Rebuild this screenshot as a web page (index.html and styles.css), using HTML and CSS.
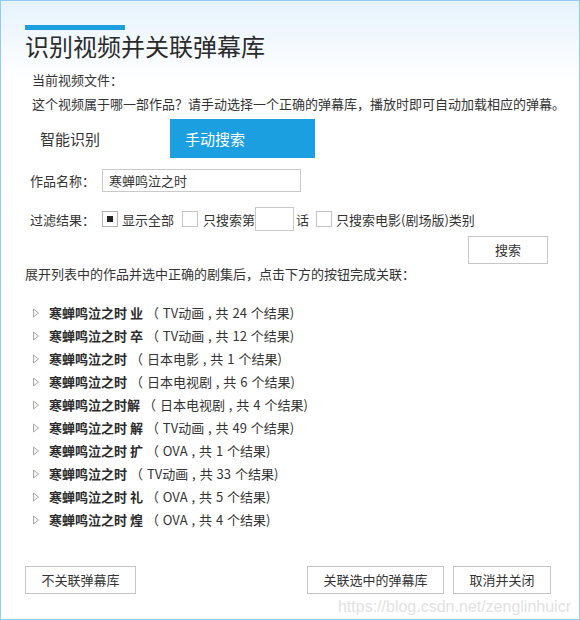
FILE: index.html
```html
<!DOCTYPE html>
<html lang="zh-CN">
<head>
<meta charset="utf-8">
<title>识别视频并关联弹幕库</title>
<link rel="stylesheet" href="styles.css">
</head>
<body>
<div class="window">
  <div class="accent"></div>
  <h1 class="title">识别视频并关联弹幕库</h1>
  <div class="info">
    <p>当前视频文件：</p>
    <p>这个视频属于哪一部作品？请手动选择一个正确的弹幕库，播放时即可自动加载相应的弹幕。</p>
  </div>
  <div class="tabs">
    <div class="tab">智能识别</div>
    <div class="tab active">手动搜索</div>
  </div>
  <div class="row row-name">
    <span class="label">作品名称：</span>
    <div class="input name-input">寒蝉鸣泣之时</div>
  </div>
  <div class="row row-filter">
    <span class="label">过滤结果：</span>
    <span class="check checked"></span>
    <span class="opt">显示全部</span>
    <span class="check"></span>
    <span class="opt opt-ep">只搜索第</span>
    <div class="input ep-input"></div>
    <span class="opt opt-hua">话</span>
    <span class="check"></span>
    <span class="opt">只搜索电影(剧场版)类别</span>
  </div>
  <div class="search-row">
    <button class="btn btn-search">搜索</button>
  </div>
  <p class="hint">展开列表中的作品并选中正确的剧集后，点击下方的按钮完成关联：</p>
  <ul class="results">
    <li><svg class="tri" viewBox="0 0 6 10" width="6" height="10"><polygon points="0.5,1 5.5,5 0.5,9" /></svg><b>寒蝉鸣泣之时 业</b><span class="meta">（ TV动画 , 共 24 个结果)</span></li>
    <li><svg class="tri" viewBox="0 0 6 10" width="6" height="10"><polygon points="0.5,1 5.5,5 0.5,9" /></svg><b>寒蝉鸣泣之时 卒</b><span class="meta">（ TV动画 , 共 12 个结果)</span></li>
    <li><svg class="tri" viewBox="0 0 6 10" width="6" height="10"><polygon points="0.5,1 5.5,5 0.5,9" /></svg><b>寒蝉鸣泣之时</b><span class="meta">（ 日本电影 , 共 1 个结果)</span></li>
    <li><svg class="tri" viewBox="0 0 6 10" width="6" height="10"><polygon points="0.5,1 5.5,5 0.5,9" /></svg><b>寒蝉鸣泣之时</b><span class="meta">（ 日本电视剧 , 共 6 个结果)</span></li>
    <li><svg class="tri" viewBox="0 0 6 10" width="6" height="10"><polygon points="0.5,1 5.5,5 0.5,9" /></svg><b>寒蝉鸣泣之时解</b><span class="meta">（ 日本电视剧 , 共 4 个结果)</span></li>
    <li><svg class="tri" viewBox="0 0 6 10" width="6" height="10"><polygon points="0.5,1 5.5,5 0.5,9" /></svg><b>寒蝉鸣泣之时 解</b><span class="meta">（ TV动画 , 共 49 个结果)</span></li>
    <li><svg class="tri" viewBox="0 0 6 10" width="6" height="10"><polygon points="0.5,1 5.5,5 0.5,9" /></svg><b>寒蝉鸣泣之时 扩</b><span class="meta">（ OVA , 共 1 个结果)</span></li>
    <li><svg class="tri" viewBox="0 0 6 10" width="6" height="10"><polygon points="0.5,1 5.5,5 0.5,9" /></svg><b>寒蝉鸣泣之时</b><span class="meta">（ TV动画 , 共 33 个结果)</span></li>
    <li><svg class="tri" viewBox="0 0 6 10" width="6" height="10"><polygon points="0.5,1 5.5,5 0.5,9" /></svg><b>寒蝉鸣泣之时 礼</b><span class="meta">（ OVA , 共 5 个结果)</span></li>
    <li><svg class="tri" viewBox="0 0 6 10" width="6" height="10"><polygon points="0.5,1 5.5,5 0.5,9" /></svg><b>寒蝉鸣泣之时 煌</b><span class="meta">（ OVA , 共 4 个结果)</span></li>
  </ul>
  <div class="footer">
    <button class="btn btn-skip">不关联弹幕库</button>
    <div class="footer-right">
      <button class="btn btn-link">关联选中的弹幕库</button>
      <button class="btn btn-cancel">取消并关闭</button>
    </div>
  </div>
  <div class="watermark">https://blog.csdn.net/zenglinhuicr</div>
</div>
</body>
</html>
```

FILE: styles.css
```css
html, body {
  margin: 0;
  padding: 0;
  background: #fff;
}

.window {
  position: relative;
  box-sizing: border-box;
  width: 580px;
  height: 620px;
  border: 1px solid #90ccef;
  background: linear-gradient(to bottom, #e6f3fc 0px, #ffffff 80px);
  padding: 24px 28px 25px 24px;
  display: flex;
  flex-direction: column;
  font-family: "Noto Sans CJK SC", "Noto Sans", sans-serif;
  font-size: 13px;
  color: #333;
}

.accent {
  width: 100px;
  height: 5px;
  background: #1b9fe1;
  flex: none;
}

.title {
  margin: 0;
  font-size: 24px;
  line-height: 32px;
  font-weight: normal;
  color: #2b2b2b;
}

.info {
  margin-top: 6px;
  padding-left: 7px;
}

.info p {
  margin: 0;
  line-height: 24px;
  white-space: nowrap;
}

.tabs {
  display: flex;
  margin-top: 3px;
  height: 39px;
}

.tab {
  width: 145px;
  box-sizing: border-box;
  padding-left: 15px;
  font-size: 15px;
  line-height: 39px;
  color: #333;
}

.tab.active {
  background: #1b9fe1;
  color: #fff;
}

.row {
  display: flex;
  align-items: center;
  padding-left: 5px;
}

.row-name {
  margin-top: 11px;
  height: 23px;
}

.row-filter {
  margin-top: 15px;
  height: 24px;
}

.label {
  width: 72px;
  flex: none;
  white-space: nowrap;
}

.input {
  box-sizing: border-box;
  border: 1px solid #c9c9c9;
  background: #fff;
}

.name-input {
  width: 199px;
  height: 23px;
  line-height: 21px;
  padding-left: 6px;
}

.ep-input {
  width: 39px;
  height: 24px;
}

.check {
  box-sizing: border-box;
  width: 16px;
  height: 16px;
  border: 1px solid #c4c4c4;
  background: #fff;
  display: flex;
  align-items: center;
  justify-content: center;
  flex: none;
}

.check.checked {
  border-color: #b0b0b0;
}

.check.checked::after {
  content: "";
  width: 6px;
  height: 6px;
  background: #222;
}

.opt {
  margin-left: 4px;
  margin-right: 8px;
  white-space: nowrap;
}

.opt-ep {
  margin-left: 5px;
  margin-right: 0;
}

.opt-hua {
  margin-left: 2px;
  margin-right: 7px;
}

.search-row {
  display: flex;
  justify-content: flex-end;
  margin-top: 5px;
}

.btn {
  box-sizing: border-box;
  height: 28px;
  border: 1px solid #c6c6c6;
  background: #fff;
  font-family: "Noto Sans CJK SC", "Noto Sans", sans-serif;
  font-size: 13px;
  color: #333;
  padding: 0;
  line-height: 26px;
}

.btn-search {
  width: 80px;
  margin-right: 3px;
}

.hint {
  margin: 0;
  line-height: 20px;
  white-space: nowrap;
}

.results {
  list-style: none;
  margin: 17px 0 0 0;
  padding: 0 0 0 8px;
}

.results li {
  display: flex;
  align-items: center;
  height: 23px;
  white-space: nowrap;
}

.tri {
  flex: none;
  margin-right: 10px;
}

.tri polygon {
  fill: #f4f4f4;
  stroke: #a9a9a9;
  stroke-width: 1;
}

.results b {
  font-weight: bold;
  color: #2b2b2b;
}

.meta {
  margin-left: 3px;
  word-spacing: 1px;
}

.footer {
  margin-top: auto;
  display: flex;
  justify-content: space-between;
  align-items: flex-end;
}

.footer-right {
  display: flex;
  gap: 9px;
}

.btn-skip {
  width: 111px;
}

.btn-link {
  width: 137px;
}

.btn-cancel {
  width: 98px;
}

.watermark {
  position: absolute;
  right: 8px;
  bottom: 3px;
  font-family: "Liberation Sans", Arial, sans-serif;
  font-size: 16px;
  color: #e2e2e2;
  pointer-events: none;
}
```
